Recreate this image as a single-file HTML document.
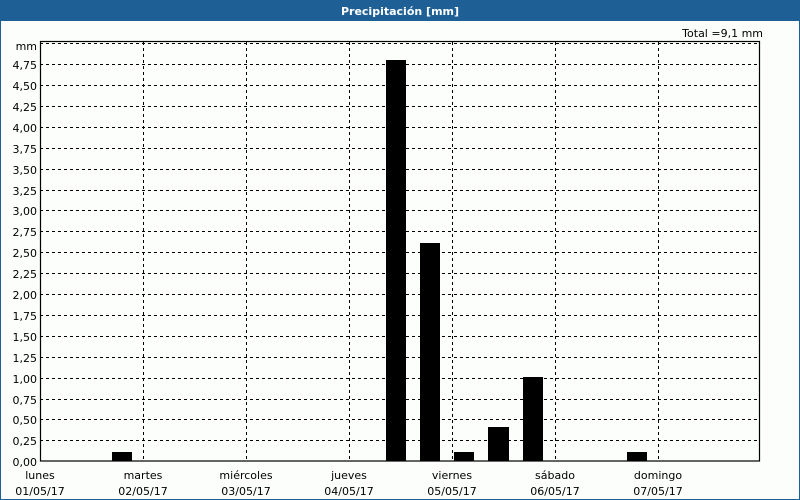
<!DOCTYPE html>
<html><head><meta charset="utf-8"><style>
body{margin:0;width:800px;height:500px;overflow:hidden;background:#fff;}
svg{display:block;font-family:"DejaVu Sans","Liberation Sans",sans-serif;}
</style></head><body>
<svg width="800" height="500" viewBox="0 0 800 500" xmlns="http://www.w3.org/2000/svg">
<rect x="0" y="0" width="800" height="500" fill="#fcfefc"/>
<rect x="0" y="0" width="800" height="21" fill="#1e6096"/>
<rect x="0" y="0" width="1" height="500" fill="#1e6096"/>
<rect x="799" y="0" width="1" height="500" fill="#1e6096"/>
<rect x="0" y="499" width="800" height="1" fill="#1e6096"/>
<text x="400" y="15" fill="#fff" font-size="11" font-weight="bold" text-anchor="middle">Precipitación [mm]</text>
<text x="763" y="37" font-size="11" text-anchor="end" fill="#000">Total =9,1 mm</text>
<g stroke="#000" stroke-width="1" stroke-dasharray="3,3" fill="none">
<path d="M40 43.5H760M40 64.5H760M40 85.5H760M40 106.5H760M40 127.5H760M40 148.5H760M40 169.5H760M40 190.5H760M40 210.5H760M40 231.5H760M40 252.5H760M40 273.5H760M40 294.5H760M40 315.5H760M40 336.5H760M40 357.5H760M40 378.5H760M40 399.5H760M40 419.5H760M40 440.5H760"/>
<path d="M143.5 42V461M246.5 42V461M349.5 42V461M452.5 42V461M555.5 42V461M658.5 42V461"/>
</g>
<rect x="40.5" y="41.5" width="719" height="419.5" fill="none" stroke="#000" stroke-width="1.2"/>
<g fill="#000">
<rect x="112" y="452" width="20" height="9"/>
<rect x="386" y="60" width="20" height="401"/>
<rect x="420" y="243" width="20" height="218"/>
<rect x="454" y="452" width="20" height="9"/>
<rect x="488" y="427" width="21" height="34"/>
<rect x="523" y="377" width="20" height="84"/>
<rect x="627" y="452" width="20" height="9"/>
</g>
<g font-size="11" text-anchor="end" fill="#000">
<text x="37" y="50">mm</text>
<text x="37" y="69">4,75</text><text x="37" y="90">4,50</text><text x="37" y="111">4,25</text><text x="37" y="132">4,00</text><text x="37" y="153">3,75</text><text x="37" y="174">3,50</text><text x="37" y="195">3,25</text><text x="37" y="215">3,00</text><text x="37" y="236">2,75</text><text x="37" y="257">2,50</text><text x="37" y="278">2,25</text><text x="37" y="299">2,00</text><text x="37" y="320">1,75</text><text x="37" y="341">1,50</text><text x="37" y="362">1,25</text><text x="37" y="383">1,00</text><text x="37" y="404">0,75</text><text x="37" y="424">0,50</text><text x="37" y="445">0,25</text><text x="37" y="466">0,00</text>
</g>
<g font-size="11" text-anchor="middle" fill="#000">
<text x="40" y="479">lunes</text><text x="40" y="495">01/05/17</text>
<text x="143" y="479">martes</text><text x="143" y="495">02/05/17</text>
<text x="246" y="479">miércoles</text><text x="246" y="495">03/05/17</text>
<text x="349" y="479">jueves</text><text x="349" y="495">04/05/17</text>
<text x="452" y="479">viernes</text><text x="452" y="495">05/05/17</text>
<text x="555" y="479">sábado</text><text x="555" y="495">06/05/17</text>
<text x="658" y="479">domingo</text><text x="658" y="495">07/05/17</text>
</g>
</svg>
</body></html>
